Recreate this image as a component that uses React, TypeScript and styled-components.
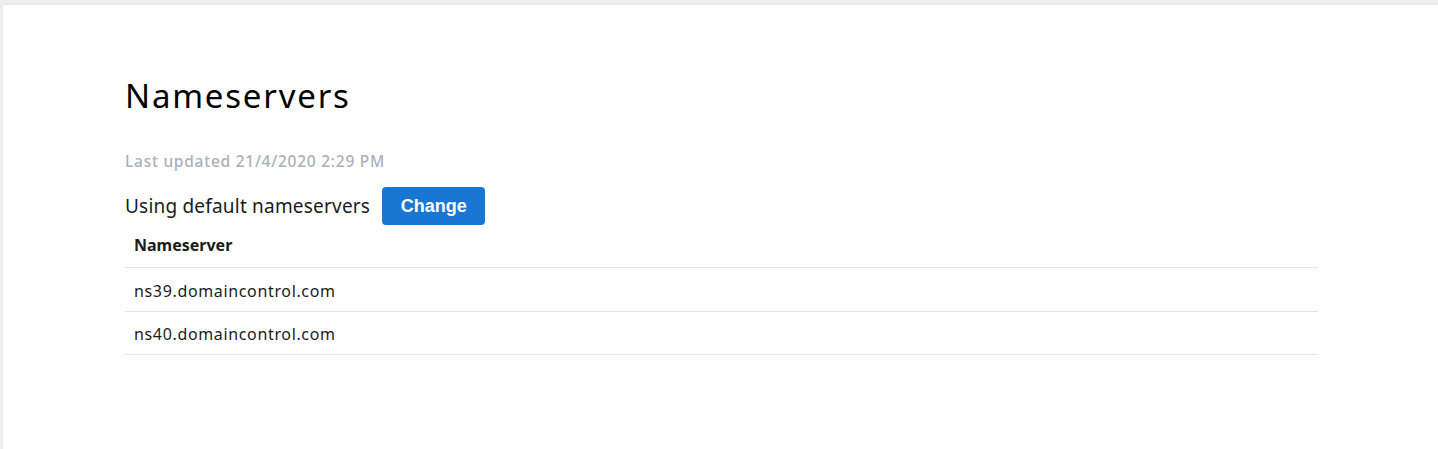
import React from "react";
import styled, { createGlobalStyle } from "styled-components";

const Global = createGlobalStyle`
  html, body { margin: 0; padding: 0; }
  body {
    background: #eeeff0;
    font-family: "Noto Sans", "Open Sans", Arial, sans-serif;
    color: #111;
  }
`;

const Card = styled.div`
  margin: 5px 0 0 3px;
  min-height: 444px;
  background: #fff;
  box-shadow: 0 -1px 3px rgba(0, 0, 0, 0.06);
  box-sizing: border-box;
  padding: 67px 120px 0 122px;
`;

const Title = styled.h1`
  margin: 0;
  font-size: 33px;
  font-weight: 400;
  line-height: 48px;
  color: #000;
  letter-spacing: 1.8px;
`;

const Updated = styled.div`
  margin-top: 31px;
  font-size: 15.5px;
  font-weight: 500;
  color: #a8b0ba;
  line-height: 20px;
  letter-spacing: 0.75px;
`;

const StatusRow = styled.div`
  display: flex;
  align-items: center;
  gap: 12px;
  margin-top: 16px;
`;

const StatusText = styled.span`
  font-size: 19px;
  color: #1b1b1b;
  letter-spacing: 0.2px;
`;

const Button = styled.button`
  height: 38px;
  width: 103px;
  border: none;
  border-radius: 4px;
  background: #1976d2;
  color: #fff;
  font-family: "Liberation Sans", Arial, sans-serif;
  font-size: 18px;
  font-weight: 700;
  cursor: pointer;
`;

const Table = styled.table`
  width: 100%;
  border-collapse: collapse;
  margin-top: 1px;
`;

const Th = styled.th`
  text-align: left;
  font-size: 16px;
  font-weight: 700;
  color: #1b1b1b;
  padding: 8px 9px 11px;
  border-bottom: 1px solid #e6e6e6;
`;

const Td = styled.td`
  font-size: 16px;
  color: #1b1b1b;
  padding: 3px 9px 0;
  height: 39.5px;
  letter-spacing: 0.65px;
  border-bottom: 1px solid #e6e6e6;
`;

const servers = ["ns39.domaincontrol.com", "ns40.domaincontrol.com"];

export default function App() {
  return (
    <>
      <Global />
      <Card>
        <Title>Nameservers</Title>
        <Updated>Last updated 21/4/2020 2:29 PM</Updated>
        <StatusRow>
          <StatusText>Using default nameservers</StatusText>
          <Button>Change</Button>
        </StatusRow>
        <Table>
          <thead>
            <tr>
              <Th>Nameserver</Th>
            </tr>
          </thead>
          <tbody>
            {servers.map((s) => (
              <tr key={s}>
                <Td>{s}</Td>
              </tr>
            ))}
          </tbody>
        </Table>
      </Card>
    </>
  );
}
